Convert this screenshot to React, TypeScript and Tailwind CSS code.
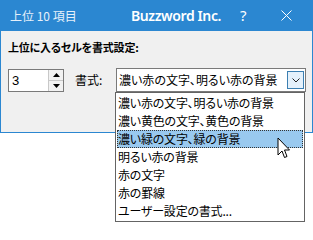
const items = [
  '濃い赤の文字、明るい赤の背景',
  '濃い黄色の文字、黄色の背景',
  '濃い緑の文字、緑の背景',
  '明るい赤の背景',
  '赤の文字',
  '赤の罫線',
  'ユーザー設定の書式...',
]

const jp = "font-['Noto_Sans_CJK_JP','Noto_Sans',sans-serif] [font-feature-settings:'palt']"

function Cursor() {
  return (
    <svg width="15" height="23" viewBox="0 0 15 23" className="absolute left-[277px] top-[137px]">
      <path d="M1 1 L1 18 L5 14 L7.5 20.5 L10 19.5 L7.5 13 L12.5 13 Z" fill="#fff" stroke="#000" strokeWidth="1" strokeLinejoin="round" />
    </svg>
  )
}

export default function App() {
  return (
    <div className={`relative w-[313px] h-[240px] overflow-hidden bg-white text-black ${jp}`}>
      {/* dialog */}
      <div className="h-[133px] border-x border-b border-[#2b87d1] bg-[#f0f0f0] flex flex-col">
        <div className="h-[31px] -mx-px bg-[#2b87d1] flex items-center text-white">
          <span className="pl-[10px] w-[131px] text-[12px] text-[#e6f0fa]">上位 10 項目</span>
          <span className="whitespace-nowrap font-['Noto_Sans',sans-serif] font-semibold text-[14px] tracking-[-0.4px]">Buzzword Inc.</span>
          <span className="ml-[19px] font-['Noto_Sans',sans-serif] text-[15px]">?</span>
          <svg width="11" height="11" viewBox="0 0 11 11" className="ml-[34px]">
            <path d="M0.5 0.5 L10.5 10.5 M10.5 0.5 L0.5 10.5" stroke="#fff" strokeWidth="1" />
          </svg>
        </div>
        <div className="pl-[7px] pt-[8px]">
          <div className="text-[11px] font-bold leading-[16px] tracking-[-0.2px]">上位に入るセルを書式設定:</div>
          <div className="mt-[13px] flex items-center">
            <div className="flex h-[23px] w-[56px] border border-[#7a7a7a] bg-white">
              <div className="flex-1 pl-[3px] text-[13px] leading-[21px] font-['Liberation_Sans',sans-serif]">3</div>
              <div className="w-[15px] flex flex-col border-l border-[#c8c8c8]">
                <div className="flex-1 flex items-center justify-center bg-[#f2f2f2] border-b border-[#c8c8c8]">
                  <svg width="7" height="4" viewBox="0 0 7 4"><path d="M0 4 L3.5 0 L7 4 Z" fill="#000" /></svg>
                </div>
                <div className="flex-1 flex items-center justify-center bg-[#f2f2f2]">
                  <svg width="7" height="4" viewBox="0 0 7 4"><path d="M0 0 L3.5 4 L7 0 Z" fill="#000" /></svg>
                </div>
              </div>
            </div>
            <span className="ml-[11px] w-[40px] text-[12px]">書式:</span>
            <div className="ml-[1px] flex h-[24px] w-[190px] items-center border border-[#7a7a7a] bg-white">
              <span className="flex-1 pl-[2px] text-[12px] whitespace-nowrap">濃い赤の文字、明るい赤の背景</span>
              <div className="mr-[1px] flex h-[18px] w-[17px] items-center justify-center border border-[#3c7fb1] bg-[#e5f1fb]">
                <svg width="8" height="5" viewBox="0 0 8 5"><path d="M0.5 0.5 L4 4 L7.5 0.5" fill="none" stroke="#222" strokeWidth="1" /></svg>
              </div>
            </div>
          </div>
        </div>
      </div>

      {/* dropdown list */}
      <div className="absolute left-[115px] top-[92px] w-[190px] border border-[#646464] bg-white py-px">
        {items.map((it, i) => (
          <div
            key={it}
            className={`mx-px h-[18px] pl-[1px] text-[12px] leading-[17px] tracking-[-0.2px] whitespace-nowrap ${
              i === 2 ? 'bg-[#99c9ef] outline outline-1 outline-dotted outline-[#333] -outline-offset-1' : ''
            }`}
          >
            {it}
          </div>
        ))}
      </div>

      <Cursor />
    </div>
  )
}
